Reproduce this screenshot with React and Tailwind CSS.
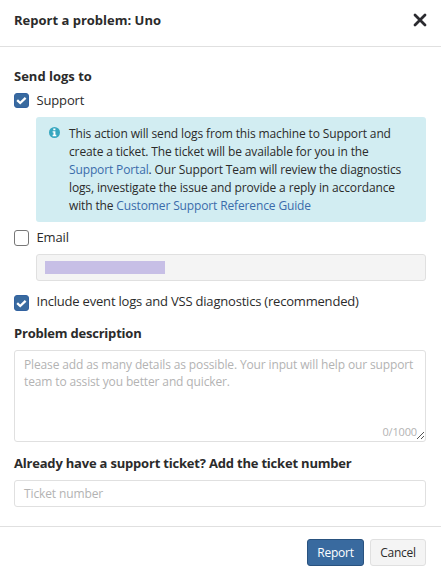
const Check = ({ on, tall }) => (
  <span className={`flex w-[15px] shrink-0 items-center justify-center rounded-[3px] border ${tall ? "h-[16px]" : "h-[15px]"} ${on ? "border-[#3262a0] bg-[#396a9f]" : "border-[#777] bg-white"}`}>
    {on && (
      <svg width="11" height="9" viewBox="0 0 11 9" fill="none" stroke="#fff" strokeWidth="2.3">
        <path d="M1.2 4.2 4.2 7 9.6 1.8" />
      </svg>
    )}
  </span>
);

export default function App() {
  return (
    <div className="flex h-[574px] w-[441px] flex-col overflow-hidden bg-white font-['Open_Sans',sans-serif] text-[13px] leading-[18px] text-[#2b2b2b]">
      <header className="flex h-[47px] shrink-0 items-center justify-between border-b border-[#e0e0e0] pr-[14px] pb-[6px] pl-[14px]">
        <h1 className="font-bold">Report a problem: Uno</h1>
        <svg width="14" height="14" viewBox="0 0 14 14" stroke="#2b2b30" strokeWidth="2.8" strokeLinecap="round">
          <path d="M2 2 12 12M12 2 2 12" />
        </svg>
      </header>
      <main className="flex h-[480px] shrink-0 flex-col border-b border-[#e0e0e0] pt-[20px] pr-[15px] pl-[14px]">
        <h2 className="font-bold">Send logs to</h2>
        <label className="mt-[6px] flex h-[19px] items-center gap-[7.5px] tracking-[-0.15px]"><Check on /><span className="-mt-px">Support</span></label>
        <div className="mt-[7px] ml-[22px] flex h-[105px] shrink-0 gap-[9px] rounded-[3px] bg-[#d2edf2] pt-[8px] pl-[13px] text-[12px] tracking-[-0.135px]">
          <svg className="mt-[2px] shrink-0" width="11" height="11" viewBox="0 0 11 11">
            <circle cx="5.5" cy="5.5" r="5.5" fill="#37a7c0" />
            <path d="M4.3 1.6h2.1v1.7H4.3zM3.6 4.2h2.8v3.5h.9V9.2H3.6V7.7h.9V5.6h-.9z" fill="#fff" />
          </svg>
          <p className="whitespace-nowrap">
            This action will send logs from this machine to Support and<br />
            create a ticket. The ticket will be available for you in the<br />
            <a className="text-[#3a6cab]">Support Portal</a>. Our Support Team will review the diagnostics<br />
            logs, investigate the issue and provide a reply in accordance<br />
            with the <a className="text-[#3a6cab]">Customer Support Reference Guide</a>
          </p>
        </div>
        <label className="mt-[7px] flex h-[18px] items-center gap-[7.5px] tracking-[-0.15px]"><Check tall /><span className="-mt-[2px]">Email</span></label>
        <div className="mt-[7px] ml-[22px] flex h-[27px] shrink-0 items-center rounded-[3px] border border-[#e0e0e0] bg-[#f4f4f4] pl-[8px]">
          <span className="h-[13px] w-[120px] bg-[#c7bfe6]" />
        </div>
        <label className="mt-[12px] flex h-[20px] items-center gap-[7.5px] tracking-[-0.2px]"><Check on tall /><span className="-mt-[4px]">Include event logs and VSS diagnostics (recommended)</span></label>
        <h2 className="mt-[11px] font-bold tracking-[-0.21px]">Problem description</h2>
        <div className="mt-[8px] flex h-[92px] shrink-0 flex-col justify-between rounded-[3px] border border-[#e0e0e0] pt-[5px] pb-px pl-[9px] text-[12px] leading-[17px] tracking-[-0.135px] text-[#b3b3b3]">
          <p className="whitespace-nowrap">Please add as many details as possible. Your input will help our support<br />team to assist you better and quicker.</p>
          <div className="flex items-end justify-end pr-px">
            <span className="text-[11px] tracking-[-0.15px]">0/1000</span>
            <svg width="7" height="8" viewBox="0 0 7 8" stroke="#555"><path d="M0 7 7 0M4 7 7 4" /></svg>
          </div>
        </div>
        <h2 className="mt-[12px] font-bold tracking-[-0.2px]">Already have a support ticket? Add the ticket number</h2>
        <div className="mt-[8px] flex h-[27px] shrink-0 items-center rounded-[3px] border border-[#e0e0e0] pl-[9px] text-[12px] tracking-[-0.12px] text-[#b3b3b3]">Ticket number</div>
      </main>
      <footer className="flex gap-[6px] pt-[12px] pl-[307px] text-[12px] tracking-[-0.25px]">
        <button className="h-[27px] w-[57px] rounded-[3px] border border-[#29527f] bg-[#396a9f] text-white">Report</button>
        <button className="h-[27px] w-[56px] rounded-[3px] border border-[#e0e0e0] bg-[#f4f4f4]">Cancel</button>
      </footer>
    </div>
  );
}
